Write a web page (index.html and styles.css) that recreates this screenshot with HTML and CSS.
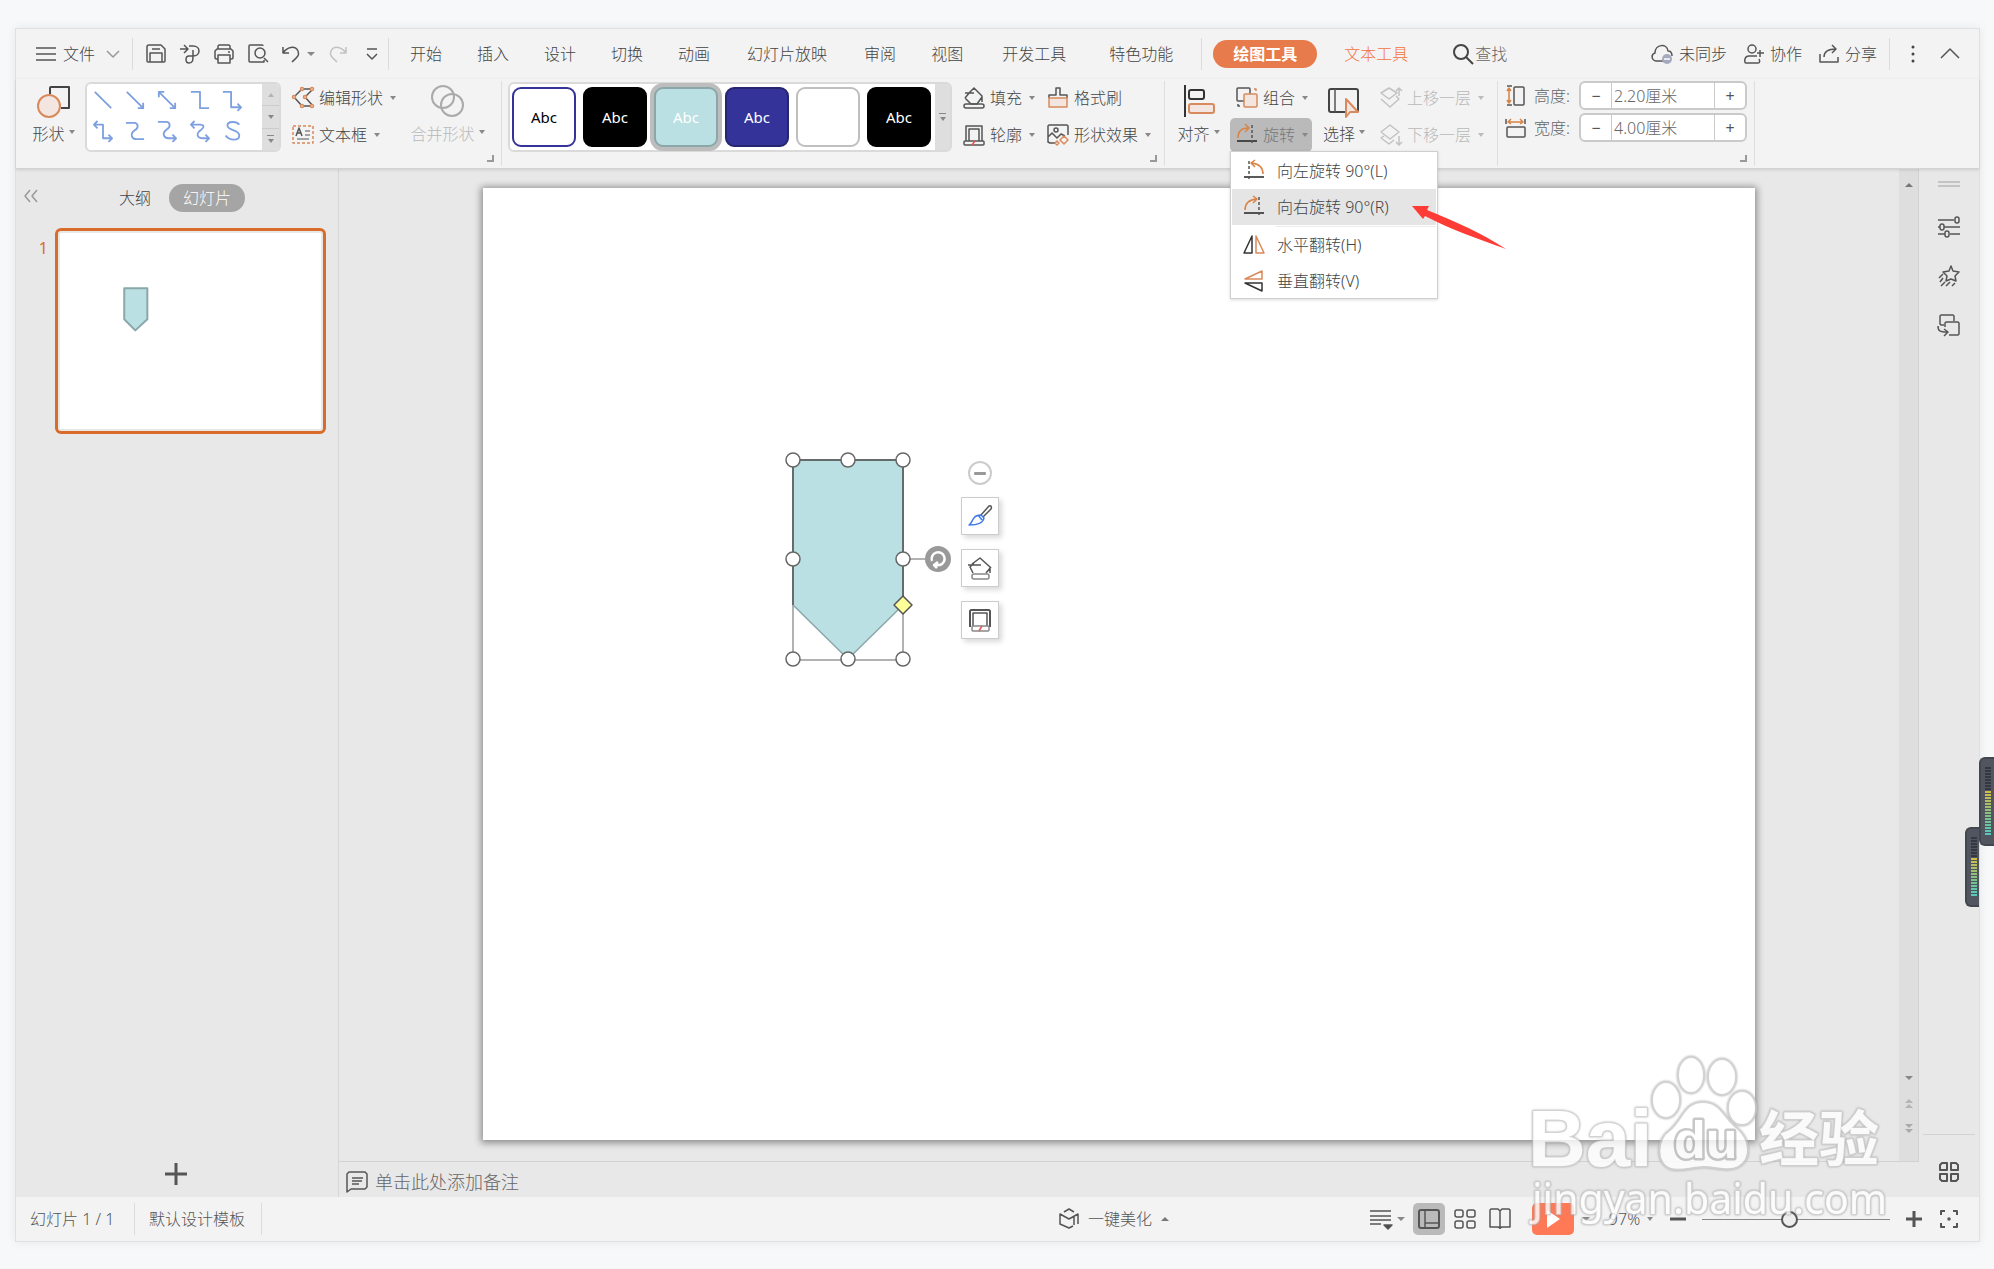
FILE: index.html
```html
<!DOCTYPE html>
<html lang="zh-CN">
<head>
<meta charset="utf-8">
<title>演示文稿</title>
<link rel="stylesheet" href="styles.css">
</head>
<body>
<main class="window">
  <header class="tabs">
    <button class="tab file"><svg class="i20" viewBox="0 0 20 20"><path d="M0 4h20M0 10h20M0 16h20"/></svg>文件<svg class="chev" viewBox="0 0 14 8"><path d="M1 1l6 6 6-6"/></svg></button>
    <span class="vline"></span>
    <div class="quick">
      <button aria-label="保存"><svg class="i20" viewBox="0 0 20 20"><path d="M1 3a2 2 0 0 1 2-2h12l4 4v12a1 1 0 0 1-1 1H2a1 1 0 0 1-1-1zM4 18v-9h12v9M6 5h8"/></svg></button>
      <button aria-label="输出"><svg class="i20" viewBox="0 0 20 20"><path d="M0 5h8M4 1l4 4-4 4M9 2h4c8 0 8 10 0 10H9c-4 0-4 7 0 7s4-3 4-7V6"/></svg></button>
      <button aria-label="打印"><svg class="i20" viewBox="0 0 20 20"><path d="M4 5V2l1-1h10l1 1v3M4 15H2l-1-1V7l2-2h14l2 2v7l-1 1h-2M4 11h12v8H4zM14 8h2"/></svg></button>
      <button aria-label="打印预览"><svg class="i20" viewBox="0 0 20 20"><path d="M8 18H2a1 1 0 0 1-1-1V2a1 1 0 0 1 1-1h12a1 1 0 0 1 1 1M16 14l4 4M16 16v2H8"/><circle cx="12" cy="9" r="5"/></svg></button>
      <button aria-label="撤销"><svg class="i18" viewBox="0 0 18 18"><path d="M1 2v6h6M1 8C5 2 13 0 16 6c2 5-2 7-6 11"/></svg></button><span class="caret first"></span>
      <button aria-label="恢复"><svg class="i18 dim" viewBox="0 0 18 18"><path d="M17 2v6h-6M17 8C13 2 5 0 2 6c-2 5 2 7 6 11"/></svg></button>
      <button aria-label="更多" class="more"><svg class="i12" viewBox="0 0 12 12"><path d="M1 1h10M1 6l5 5 5-5"/></svg></button>
    </div>
    <span class="vline"></span>
    <nav class="menu">
      <a href="#">开始</a><a href="#">插入</a><a href="#">设计</a><a href="#">切换</a><a href="#">动画</a><a href="#" class="long">幻灯片放映</a><a href="#">审阅</a><a href="#">视图</a><a href="#" class="wide">开发工具</a><a href="#" class="wide">特色功能</a>
    </nav>
    <span class="vline after-menu"></span>
    <a href="#" class="pill">绘图工具</a>
    <a href="#" class="texttool">文本工具</a>
    <button class="find"><svg class="i22" viewBox="0 0 22 22"><circle cx="9" cy="9" r="7" stroke-width="2"/><path d="M14 14l7 7" stroke-width="2"/></svg>查找</button>
    <div class="account">
      <button><svg class="i22" viewBox="0 0 22 22"><path d="M12 18H5c-5-1-5-7-1-8 0-9 12-10 13-2 3 0 4 2 4 5"/><circle class="badge" cx="16" cy="16" r="5"/><path d="M13 16h6" stroke="#fff"/></svg>未同步</button>
      <button><svg class="i20" viewBox="0 0 20 20"><circle cx="8" cy="5" r="4"/><path d="M13 12H5c-5 0-5 7-3 7h12c2 0 2-2 1-4M13 9h7M16 6v7"/></svg>协作</button>
      <button><svg class="i20" viewBox="0 0 20 20"><path d="M1 10v8h18v-5M5 13c0-6 5-8 12-8M13 1l4 4-4 4"/></svg>分享</button>
    </div>
    <span class="vline"></span>
    <button class="dots" aria-label="更多选项"><svg class="i20" viewBox="0 0 20 20"><g fill="#444" stroke="none"><circle cx="10" cy="3" r="1.5"/><circle cx="10" cy="10" r="1.5"/><circle cx="10" cy="17" r="1.5"/></g></svg></button>
    <button class="collapse" aria-label="收起功能区"><svg class="i20" viewBox="0 0 20 20"><path d="M1 14l9-9 9 9"/></svg></button>
  </header>

  <section class="ribbon" aria-label="绘图工具">
    <button class="big shape"><svg class="i34" viewBox="0 0 34 34"><path stroke="#444" stroke-width="2" d="M13 9V3a1 1 0 0 1 1-1h18v21h-8"/><circle class="peach" cx="12" cy="21" r="11"/></svg><span>形状<i class="caret"></i></span></button>
    <div class="shapes">
      <div class="shape-cells">
        <button aria-label="直线"><svg viewBox="0 0 22 22"><path d="M2 2l18 18"/></svg></button>
        <button aria-label="箭头"><svg viewBox="0 0 22 22"><path d="M2 2l18 18M20 14v6h-6"/></svg></button>
        <button aria-label="双箭头"><svg viewBox="0 0 22 22"><path d="M2 2l18 18M20 14v6h-6M2 8V2h6"/></svg></button>
        <button aria-label="肘形线"><svg viewBox="0 0 22 22"><path d="M1 2h10v18h10"/></svg></button>
        <button aria-label="肘形箭头"><svg viewBox="0 0 22 22"><path d="M1 2h9v17h11M17 15l4 4-4 4"/></svg></button>
        <button aria-label="肘形双箭头"><svg viewBox="0 0 22 22"><path d="M1 4h10v15h10M17 15l4 4-4 4M5 0L1 4l4 4"/></svg></button>
        <button aria-label="曲线"><svg viewBox="0 0 22 22"><path d="M1 2h9c5 0 5 6 1 8-6 4-4 10 2 10h8"/></svg></button>
        <button aria-label="曲线箭头"><svg viewBox="0 0 22 22"><path d="M1 1h9c5 0 5 6 1 8-6 4-4 10 2 10h8M17 15l4 4-4 4"/></svg></button>
        <button aria-label="曲线双箭头"><svg viewBox="0 0 22 22"><path d="M1 4h10c5 0 5 3 1 6-6 4-4 9 2 9h7M17 15l4 4-4 4M5 0L1 4l4 4"/></svg></button>
        <button aria-label="自由曲线"><svg viewBox="0 0 22 22"><path d="M19 4c-3-4-13-4-13 1 0 6 13 4 13 11 0 6-11 6-15 0"/></svg></button>
      </div>
      <div class="gallery-scroll">
        <button aria-label="上一行"><i class="caret up pale"></i></button><button aria-label="下一行"><i class="caret"></i></button><button aria-label="展开"><i class="bar"></i><i class="caret"></i></button>
      </div>
    </div>
    <div class="col edit">
      <button><svg class="i22" viewBox="0 0 22 22"><path stroke="#555" d="M10 2L2 10l8 9M10 2h11l-8 8 8 9H10"/><g class="peach thin"><circle cx="10" cy="2" r="1.5"/><circle cx="20" cy="2" r="1.5"/><circle cx="2" cy="10" r="1.5"/><circle cx="13" cy="10" r="1.5"/><circle cx="10" cy="19" r="1.5"/><circle cx="20" cy="19" r="1.5"/></g></svg>编辑形状<i class="caret"></i></button>
      <button><svg class="i22" viewBox="0 0 22 22"><path stroke="#d9895a" stroke-dasharray="3 2" d="M1 2h20v17H1z"/><path d="M4 12l3-8 3 8M5 9h4" /><path stroke-width="1" d="M13 7h5M13 11h5M5 15h12"/></svg>文本框<i class="caret"></i></button>
    </div>
    <button class="big merge dim" disabled><svg class="i34" viewBox="0 0 34 34"><g stroke="#aaa" stroke-width="2"><circle cx="12" cy="12" r="11"/><circle cx="21" cy="20" r="11"/></g></svg><span>合并形状<i class="caret"></i></span></button>
    <i class="corner"></i>
    <span class="sep"></span>
    <div class="styles">
      <button class="st outline">Abc</button><button class="st black">Abc</button><button class="st teal">Abc</button><button class="st navy">Abc</button><button class="st plain" aria-label="无填充"></button><button class="st black">Abc</button>
      <button class="styles-more" aria-label="更多样式"><i class="bar"></i><i class="caret"></i></button>
    </div>
    <div class="col fill">
      <button><svg class="i22" viewBox="0 0 22 22"><path d="M2 6h9M5 7l6-6 8 8v6M2 11l6 6h6l5-7M2 11l5-6"/><rect x="1" y="17" width="20" height="4" rx="2"/></svg>填充<i class="caret"></i></button>
      <button><svg class="i22" viewBox="0 0 22 22"><path d="M3 17V2h16v15M6 17V5h10v12"/><rect x="1" y="17" width="20" height="4" rx="1"/><path stroke="#e55" d="M9 21l3-4"/></svg>轮廓<i class="caret"></i></button>
    </div>
    <div class="col effect">
      <button><svg class="i22" viewBox="0 0 22 22"><path d="M2 11V8h7V1h4v7h7v3"/><path class="peach thin" d="M2 11h18v9H2z"/></svg>格式刷</button>
      <button><svg class="i22" viewBox="0 0 22 22"><path d="M8 19H3l-2-1V2l1-1h18l1 1v9M1 13l4-4 5 5 4-4 4 2"/><circle cx="9" cy="6" r="2"/><g stroke="#d9895a"><path d="M17 12l4 4-4 4-4-4zM10 17l2 2-2 2-2-2z"/></g></svg>形状效果<i class="caret"></i></button>
    </div>
    <i class="corner"></i>
    <span class="sep"></span>
    <button class="big align"><svg class="i34" viewBox="0 0 34 34"><path stroke="#333" stroke-width="2" d="M3 0v32"/><rect x="7" y="5" width="15" height="9" rx="2" stroke="#333" stroke-width="2"/><rect class="peach" x="7" y="19" width="25" height="9" rx="2"/></svg><span>对齐<i class="caret"></i></span></button>
    <div class="col arrange">
      <button><svg class="i22" viewBox="0 0 22 22"><rect x="1" y="1" width="13" height="13" rx="1"/><rect class="peach thin" x="8" y="7" width="13" height="13" rx="1"/><path stroke="#d9895a" d="M18 2h2v2"/><path d="M2 17v2h2"/></svg>组合<i class="caret"></i></button>
      <div class="rotate">
        <button class="on" aria-expanded="true"><svg class="i22" viewBox="0 0 22 22"><path stroke="#d98345" d="M2 14C2 8 5 4 12 4M9 0l4 4-4 4"/><path d="M1 17h20" stroke="#222"/><path d="M16 1v20" stroke-dasharray="3 2"/></svg>旋转<i class="caret"></i></button>
        <div class="dropdown" role="menu">
          <button role="menuitem"><svg class="i22" viewBox="0 0 22 22"><path stroke="#d98345" d="M20 14c0-6-3-10-11-11M12 0L8 3l4 4"/><path d="M1 17h20" stroke="#222"/><path d="M6 1v20" stroke-dasharray="3 2"/></svg>向左旋转 90°(L)</button>
          <button role="menuitem" class="hover"><svg class="i22" viewBox="0 0 22 22"><path stroke="#d98345" d="M2 14C2 8 5 4 13 3M10 0l4 3-4 4"/><path d="M1 17h20" stroke="#222"/><path d="M16 1v20" stroke-dasharray="3 2"/></svg>向右旋转 90°(R)</button>
          <hr>
          <button role="menuitem"><svg class="i22" viewBox="0 0 22 22"><path d="M9 2v17H1z" stroke="#333"/><path d="M13 2v17h8z" stroke="#d9895a"/></svg>水平翻转(H)</button>
          <button role="menuitem"><svg class="i22" viewBox="0 0 22 22"><path d="M19 1v8H2z" stroke="#d9895a"/><path d="M19 21v-8H2z" stroke="#333"/></svg>垂直翻转(V)</button>
        </div>
        <svg class="pointer" viewBox="0 0 94 44" aria-hidden="true"><path fill="#ff3b36" stroke="none" d="M0 0l17 0-2 4c30 12 54 23 79 39C66 33 40 24 13 10l-2 3z"/></svg>
      </div>
    </div>
    <button class="big select"><svg class="i34" viewBox="0 0 34 34"><rect x="2" y="4" width="29" height="23" rx="2" stroke="#444" stroke-width="2"/><path d="M8 4v23"/><path class="peach" d="M19 14v18l4-5h8z"/></svg><span>选择<i class="caret"></i></span></button>
    <div class="col layer dim">
      <button disabled><svg class="i22" viewBox="0 0 22 22"><path d="M9 1l8 5-8 6-8-6zM1 12l9 8 9-8-3-3M19 9V1M16 4l3-3 3 3"/></svg>上移一层<i class="caret"></i></button>
      <button disabled><svg class="i22" viewBox="0 0 22 22"><path d="M10 1l9 7-9 7-9-7zM4 12l-3 2 8 6 5-4M19 12v9M16 18l3 3 3-3"/></svg>下移一层<i class="caret"></i></button>
    </div>
    <span class="sep"></span>
    <div class="size">
      <div class="field"><svg class="i20" viewBox="0 0 20 20"><rect x="8" y="1" width="10" height="18" rx="1"/><path d="M1 0h5M1 19h5"/><path stroke="#d98345" d="M3 2v15M1 5l2-3 2 3M1 14l2 3 2-3"/></svg><label for="h">高度:</label><div class="spin"><button aria-label="减小高度">−</button><input id="h" value="2.20厘米"><button aria-label="增大高度">+</button></div></div>
      <div class="field"><svg class="i20" viewBox="0 0 20 20"><rect x="1" y="9" width="18" height="10" rx="1"/><path d="M0 1v5M19 1v5"/><path stroke="#d98345" d="M2 4h15M5 1L2 4l3 2M14 1l3 3-3 2"/></svg><label for="w">宽度:</label><div class="spin"><button aria-label="减小宽度">−</button><input id="w" value="4.00厘米"><button aria-label="增大宽度">+</button></div></div>
      <i class="corner"></i>
    </div>
    <span class="sep"></span>
  </section>

  <div class="body">
    <aside class="outline-panel">
      <div class="panel-head">
        <button aria-label="收起" class="fold"><svg class="i14" viewBox="0 0 14 14"><path d="M6 1L1 7l5 6M13 1L8 7l5 6"/></svg></button>
        <button class="view">大纲</button><button class="view current">幻灯片</button>
      </div>
      <div class="slides"><span class="num">1</span><button class="thumb" aria-label="幻灯片 1"><svg viewBox="0 0 262 197"><path fill="#bbe0e3" stroke="#8ba7a9" stroke-width="2" d="M65 56h23v31l-12 11-11-11z"/></svg></button></div>
      <button class="add" aria-label="新建幻灯片"><svg class="i22" viewBox="0 0 22 22"><path stroke-width="3" d="M11 0v22M0 11h22"/></svg></button>
    </aside>
    <section class="center">
      <div class="stage-row">
        <div class="stage">
          <div class="slide">
            <svg class="drawing" viewBox="0 0 240 230">
              <path fill="none" stroke="#999" d="M20 20h110v200H20zM130 119h22"/>
              <path fill="#bbe0e3" stroke="#8ba7a9" d="M20 20h110v145l-55 54-55-54z"/>
              <path fill="none" stroke="#555" d="M20 165V20h110v145"/>
              <g fill="#fff" stroke="#666"><circle cx="20" cy="20" r="7"/><circle cx="75" cy="20" r="7"/><circle cx="130" cy="20" r="7"/><circle cx="20" cy="119" r="7"/><circle cx="130" cy="119" r="7"/><circle cx="20" cy="219" r="7"/><circle cx="75" cy="219" r="7"/><circle cx="130" cy="219" r="7"/></g>
              <path fill="#ffff99" stroke="#555" d="M130 156l9 9-9 9-9-9z"/>
              <circle cx="165" cy="119" r="13" fill="#999" stroke="none"/><path d="M159 121A6.500 6.500 0 1 1 167 125h-4M165 122l-4 3 3 3" stroke="#fff" stroke-width="2.500"/>
            </svg>
            <div class="float-tools">
              <button class="minus" aria-label="收起"></button>
              <button class="ft" aria-label="样式"><svg class="i26" viewBox="0 0 26 26"><path d="M14 12l8-9c2-1 3 1 2 3l-8 8"/><path stroke="#3f7be8" d="M14 12l3 3c-1 6-8 7-15 7 3-2 3-5 5-7 2-3 4-3 7-3zM11 12l4 5"/></svg></button>
              <button class="ft" aria-label="填充"><svg class="i26" viewBox="0 0 26 26"><path d="M1 10h13M5 9l8-6 10 9v6M6 18l-3-6 4-4M19 18l5-6"/><rect x="5" y="19" width="17" height="5" rx="2" stroke="#888"/></svg></button>
              <button class="ft" aria-label="轮廓"><svg class="i26" viewBox="0 0 26 26"><path d="M3 20V4l1-1h18l1 1v16" stroke-width="2"/><path d="M6 19V6h14v13"/><rect x="5" y="19" width="17" height="5" rx="1" stroke="#888"/><path stroke="#e55" d="M12 24l3-5"/></svg></button>
            </div>
          </div>
        </div>
        <div class="scrollbar"><button aria-label="向上滚动"><i class="caret up"></i></button><span class="track"></span><button aria-label="向下滚动"><i class="caret"></i></button><button aria-label="上一张"><i class="caret up pale"></i><i class="caret up pale"></i></button><button aria-label="下一张"><i class="caret pale"></i><i class="caret pale"></i></button></div>
      </div>
      <div class="notes"><svg class="i22" viewBox="0 0 22 22"><path d="M1 21V3l2-2h16l2 2v13l-2 2H5zM6 7h11M6 10h10M6 13h7"/></svg>单击此处添加备注</div>
    </section>
    <aside class="side">
      <span class="grip"></span>
      <button aria-label="属性"><svg class="i22" viewBox="0 0 22 22"><path d="M0 4h16M0 11h2M6 11h16M0 18h7M12 18h10"/><rect x="17" y="1" width="4" height="6" rx="2"/><rect x="2" y="8" width="4" height="6" rx="2"/><rect x="7" y="15" width="4" height="6" rx="2"/></svg></button>
      <button aria-label="动画"><svg class="i22" viewBox="0 0 22 22"><path d="M13 1l2 5 6 1-4 4 1 5-5-2-5 2 1-5-4-4 6-1zM5 9l-4 4M5 13l-3 4M7 17l-4 4M12 17l-4 4M17 18l-3 3"/></svg></button>
      <button aria-label="切换"><svg class="i22" viewBox="0 0 22 22"><path d="M6 11H3l-1-1V2l1-1h12l1 1v5M11 8h9l1 1v11l-1 1h-9M7 13V9l1-1h3M0 12c0 5 2 6 9 6M6 15l4 3-4 4"/></svg></button>
      <button class="apps" aria-label="工具"><svg class="i22" viewBox="0 0 22 22"><g stroke-width="2"><path d="M4 2h5v7H2V4zM13 2h5l2 2v5h-7zM2 13h7v7H4l-2-2zM13 13h7v5l-2 2h-5z"/></g></svg></button>
    </aside>
  </div>

  <footer class="status">
    <span class="count">幻灯片 1 / 1</span><span class="vline"></span><span class="tpl">默认设计模板</span><span class="vline"></span>
    <button class="beautify"><svg class="i20" viewBox="0 0 20 20"><path d="M5 3l5-3 5 3M14 17l-4 2-9-4V5l9 5 9-5v10M15 8v8"/></svg>一键美化<i class="caret up"></i></button>
    <div class="views">
      <button aria-label="备注"><svg class="i22" viewBox="0 0 22 22"><path d="M0 3h21M0 8h21M0 12h21M0 16h11"/><path fill="#444" d="M14 17h8l-4 4z"/></svg></button><i class="caret"></i>
      <button class="on" aria-label="普通视图"><svg class="i22" viewBox="0 0 22 22"><rect x="1" y="2" width="20" height="18" rx="2" stroke-width="2"/><path d="M7 2v18M7 15h14"/></svg></button>
      <button aria-label="幻灯片浏览"><svg class="i22" viewBox="0 0 22 22"><rect x="1" y="2" width="8" height="7" rx="2"/><rect x="13" y="2" width="8" height="7" rx="2"/><rect x="1" y="13" width="8" height="7" rx="2"/><rect x="13" y="13" width="8" height="7" rx="2"/></svg></button>
      <button class="read" aria-label="阅读视图"><svg class="i22" viewBox="0 0 22 22"><path d="M11 3v18M11 3L9 1H2L1 2v17h8l2 1 2-1h8V2l-1-1h-7z"/></svg></button>
      <button class="play" aria-label="放映"><svg class="i22" viewBox="0 0 22 22"><path fill="#fff" stroke="none" d="M5 2l13 9-13 9z"/></svg></button><i class="caret"></i>
    </div>
    <div class="zoom">
      <button class="pct">97%<i class="caret"></i></button>
      <button aria-label="缩小"><svg class="i18" viewBox="0 0 18 18"><path stroke-width="3" d="M1 9h16"/></svg></button>
      <input type="range" min="0" max="100" value="46" aria-label="缩放">
      <button aria-label="放大"><svg class="i18" viewBox="0 0 18 18"><path stroke-width="3" d="M1 9h16M9 1v16"/></svg></button>
      <button class="fit" aria-label="适应窗口"><svg class="i18" viewBox="0 0 18 18"><path stroke-width="2" d="M1 5V1h4M13 1h4v4M17 13v4h-4M5 17H1v-4"/><circle cx="9" cy="9" r="1"/></svg></button>
    </div>
  </footer>
</main>

<div class="meter lower" aria-hidden="true"><span></span></div>
<div class="meter upper" aria-hidden="true"><span></span></div>
<svg class="watermark" viewBox="0 0 370 186">
  <g class="wm">
    <ellipse cx="142" cy="55" rx="14" ry="18"/><ellipse cx="167" cy="30" rx="13" ry="18"/><ellipse cx="198" cy="32" rx="14" ry="18"/><ellipse cx="218" cy="63" rx="14" ry="17"/>
    <path d="M179 57c-19 0-20 17-33 28-14 9-15 34 1 39 10 3 22-2 33-2 12 0 25 5 34 0 15-8 12-28-1-39-13-10-16-26-34-26z"/>
    <text class="brand" x="4" y="121">Bai</text><text class="du" x="150" y="113">du</text><text class="cn" x="235" y="116">经验</text>
    <text class="url" x="8" y="169">jingyan.baidu.com</text>
  </g>
</svg>
</body>
</html>
```
FILE: styles.css
```css
* { box-sizing: border-box; }
body { margin: 0; min-height: 100vh; display: flex; position: relative; padding: 28px 14px 27px 15px; background: #f7f8fa; color: #444; overflow-x: hidden;
  font: 300 16px/24px "Noto Sans", "Noto Sans CJK SC", sans-serif; }
button { font: inherit; color: inherit; background: none; border: 0; padding: 0; display: flex; align-items: center; justify-content: center; white-space: nowrap; }
a { color: inherit; text-decoration: none; white-space: nowrap; }
svg { display: block; flex: none; fill: none; stroke: #555; stroke-width: 1.5; stroke-linejoin: round; }
.i12 { width: 12px; height: 12px; }
.i14 { width: 14px; height: 14px; }
.i18 { width: 18px; height: 18px; }
.i20 { width: 20px; height: 20px; }
.i22 { width: 22px; height: 22px; }
.i26 { width: 26px; height: 26px; }
.i34 { width: 34px; height: 34px; }
.i22, .i20, .i34 { overflow: visible; }
.peach { fill: #f3e5df; stroke: #d98a5c; stroke-width: 2; }
.thin { stroke-width: 1.5; }
.caret { display: inline-block; flex: none; width: 0; height: 0; border: 3px solid transparent; border-top: 4px solid #888; border-bottom: 0; }
.caret.up { border-top: 0; border-bottom: 4px solid #777; }
.caret.pale { border-top-color: #aaa; border-bottom-color: #b4b4b4; }
.caret.up.pale { border-top: 0; }
.bar { display: block; width: 7px; height: 1px; background: #888; }
.vline { width: 1px; height: 32px; background: #dcdcdc; flex: none; }

.window { flex: 1; min-width: 0; min-height: 1213px; display: flex; flex-direction: column; border: 1px solid #e0e0e0; background: #e8e8e8; box-shadow: 0 0 10px rgba(0,0,0,.07); }

.tabs { height: 50px; display: flex; align-items: center; background: #f3f3f3; padding-left: 20px; }
.file { gap: 7px; margin-right: 12px; }
.chev { width: 14px; height: 8px; stroke: #999; margin-left: 4px; }
.quick { display: flex; align-items: center; gap: 14px; padding-left: 13px; width: 255px; }
.quick .first { margin: 0 0 0 -7px; }
.quick .more { margin-left: 5px; }
.dim, .dim svg, svg.dim { color: #b8b8b8; stroke: #c2c2c2; }
.menu { display: flex; gap: 35px; margin-left: 21px; }
.menu .long { padding: 0 2px; }
.menu .wide { padding: 0 4px; }
.after-menu { margin-left: 24px; }
.pill { background: #e77b4b; color: #fff; font-weight: bold; padding: 2px 20px; border-radius: 14px; margin-left: 11px; }
.texttool { color: #f4743f; margin-left: 27px; }
.find { margin-left: 44px; gap: 1px; color: #666; }
.find svg { stroke: #444; }
.account { display: flex; gap: 17px; margin: 0 12px 0 auto; }
.account button { gap: 6px; }
.badge { fill: #a4a9bd; stroke: none; }
.dots { margin-left: 13px; }
.collapse { margin: 0 19px 0 17px; }

.ribbon { height: 90px; display: flex; align-items: flex-start; background: #f3f3f3; border-bottom: 1px solid #d2d2d2; box-shadow: 0 1px 3px rgba(0,0,0,.12); position: relative; z-index: 2; padding-top: 2px; }
.ribbon > * { flex: none; }
.big { flex-direction: column; gap: 3px; height: 71px; padding-top: 4px; align-items: center; justify-content: flex-start; }
.big span { display: flex; align-items: center; gap: 4px; height: 24px; }
.big .caret { margin-bottom: 5px; }
.shape { margin-left: 16px; width: 43px; }
.merge { width: 75px; }
.align { margin-left: 12px; width: 43px; }
.select { margin-left: 10px; width: 44px; }
.corner { display: block; width: 7px; height: 7px; border: solid #999; border-width: 0 2px 2px 0; margin: 74px 0 0 2px; }
.sep { width: 1px; height: 85px; background: #dedede; margin-left: 7px; }
.shapes { display: flex; margin: 1px 0 0 10px; width: 196px; height: 70px; border: 2px solid #dadada; border-radius: 6px; background: #fff; overflow: hidden; }
.shape-cells { flex: 1; display: grid; grid-template-columns: repeat(5, 1fr); padding: 0 14px 4px 0; }
.shape-cells svg { width: 20px; height: 20px; stroke: #7da0e0; overflow: visible; stroke-width: 2; }
.gallery-scroll { width: 17px; background: #dedede; display: flex; flex-direction: column; }
.gallery-scroll button { flex: 1; flex-direction: column; gap: 3px; border-bottom: 1px solid #ccc; }
.gallery-scroll button:last-child { border: 0; }
.col { display: flex; flex-direction: column; gap: 3px; }
.col > button, .rotate > button { height: 34px; gap: 5px; justify-content: flex-start; }
.col .caret { margin-left: 2px; }
.edit { margin-left: 11px; width: 118px; }
.styles { display: flex; align-items: center; gap: 7px; margin: 1px 0 0 6px; width: 444px; height: 70px; border: 2px solid #dadada; border-radius: 6px; background: #fff; padding-left: 2px; }
.st { width: 64px; height: 60px; border-radius: 9px; border: 2px solid #000; font-size: 15px; font-weight: 400; }
.outline { border-color: #333399; color: #000; }
.black { background: #000; color: #fff; }
.teal { background: #bbe0e3; border-color: #8ba7a9; color: #fff; box-shadow: 0 0 0 4px #bdbdbd; }
.navy { background: #333399; border-color: #26266f; color: #fff; }
.plain { border-color: #bfbfbf; background: #fff; }
.styles-more { flex: 1; align-self: stretch; margin-left: -3px; background: #dedede; flex-direction: column; gap: 3px; }
.fill { margin-left: 11px; width: 84px; }
.effect { width: 101px; }
.arrange { margin-left: 10px; width: 82px; }
.arrange > button, .rotate > button { padding-left: 6px; width: 82px; }
.on { background: #bababa; border-radius: 5px; }
.rotate { position: relative; }
.rotate .on { color: #777; }
.dropdown { position: absolute; left: 0; top: 33px; width: 208px; height: 148px; padding: 1px; background: #fff; border: 1px solid #cfcfcf; box-shadow: 0 1px 3px rgba(0,0,0,.15); }
.dropdown button { width: 100%; height: 36px; justify-content: flex-start; gap: 12px; padding-left: 11px; }
.dropdown .hover { background: #e5e5e5; }
.dropdown hr { margin: 1px 0 0 44px; border: 0; height: 1px; background: #ececec; }
.pointer { position: absolute; left: 182px; top: 88px; width: 94px; height: 44px; }
.layer { margin-left: 14px; width: 110px; }
.layer .caret { border-top-color: #bbb; }
.size { margin-left: 8px; display: flex; flex-direction: column; gap: 3px; }
.size .corner { margin: 10px 0 0; align-self: flex-end; }
.field { display: flex; align-items: center; color: #666; }
.field label { width: 45px; margin-left: 8px; }
.spin { width: 168px; height: 29px; display: flex; border: 2px solid #cacaca; border-radius: 6px; background: #fff; }
.spin button { width: 30px; color: #555; font-weight: 400; }
.spin input { flex: 1; min-width: 0; border: solid #cacaca; border-width: 0 1px; padding: 0 2px; font: inherit; color: #666; background: none; }

.body { flex: 1; display: flex; min-height: 0; }
.outline-panel { width: 323px; border-right: 1px solid #d6d6d6; display: flex; flex-direction: column; }
.panel-head { display: flex; align-items: center; padding: 14px 0 0 8px; height: 44px; }
.fold svg { stroke: #999; }
.view { height: 28px; margin-left: 81px; }
.view.current { background: #a5a5a5; color: #fff; border-radius: 14px; padding: 0 14px; margin-left: 18px; }
.fold { margin-bottom: 4px; }
.slides { display: flex; margin-top: 15px; }
.num { width: 31px; margin-left: 8px; text-align: right; padding: 8px 7px 0 0; color: #d96b2b; font-weight: 400; }
.thumb { flex: 1; margin-right: 12px; border: 3px solid #d96b2b; border-radius: 6px; background: #fff; box-shadow: inset 0 0 0 2px #e8e8e8; padding: 1px; }
.thumb svg { width: 100%; }
.add { margin: auto 0 12px; padding-right: 3px; }
.center { flex: 1; min-width: 0; display: flex; flex-direction: column; }
.stage-row { flex: 1; display: flex; }
.stage { flex: 1; padding: 19px 144px 21px; display: flex; }
.slide { flex: 1; position: relative; background: #fff; box-shadow: 0 1px 7px 2px rgba(0,0,0,.4); }
.drawing { position: absolute; left: 290px; top: 252px; width: 240px; height: 230px; }
.float-tools { position: absolute; left: 478px; top: 273px; width: 38px; display: flex; flex-direction: column; align-items: center; gap: 14px; }
.minus { width: 24px; height: 24px; border: 2px solid #ccc; border-radius: 12px; margin-bottom: -2px; }
.minus::before { content: ""; width: 12px; height: 3px; background: #999; border-radius: 1px; }
.ft { width: 38px; height: 38px; border: 1px solid #ccc; background: #fff; box-shadow: 3px 3px 5px rgba(0,0,0,.15); }
.scrollbar { width: 20px; background: #dedede; border-right: 1px solid #d2d2d2; display: flex; flex-direction: column; padding: 8px 0 16px; }
.scrollbar button { height: 16px; flex-direction: column; gap: 1px; margin-bottom: 9px; }
.scrollbar .caret { border-left-width: 4px; border-right-width: 4px; }
.track { flex: 1; }
.notes { height: 36px; border-top: 1px solid #d2d2d2; display: flex; align-items: center; gap: 7px; padding: 4px 0 0 7px; font-size: 18px; color: #666; }
.side { width: 60px; display: flex; flex-direction: column; align-items: center; gap: 27px; }
.grip { width: 22px; height: 6px; border: solid #c4c4c4; border-width: 2px 0; margin: 12px 0 2px; }
.apps { margin-top: auto; width: 52px; border-top: 1px solid #d2d2d2; padding: 26px 0 14px; }

.status { height: 44px; display: flex; align-items: center; background: #f3f3f3; color: #555; }
.count { width: 118px; padding-left: 14px; white-space: nowrap; }
.tpl { padding: 0 16px 0 14px; white-space: nowrap; }
.beautify { gap: 9px; margin: 0 196px 0 auto; }
.beautify .caret, .views .caret, .quick .caret { border-left-width: 4px; border-right-width: 4px; }
.views { display: flex; align-items: center; }
.views button { width: 32px; height: 32px; }
.views > button + button { margin-left: 9px; }
.views > .on { margin: 0 0 0 8px; }
.views > .on + button { margin-left: 4px; }
.views > .read { margin-left: 3px; }
.views > .play { width: 42px; margin: 0 8px 0 16px; background: #ff7957; border-radius: 5px; }
.zoom { display: flex; align-items: center; margin: 0 21px 0 17px; }
.pct { gap: 7px; width: 48px; margin-right: 14px; }
.zoom input { width: 188px; height: 18px; margin: 0 15px; appearance: none; background: none; }
.zoom input::-webkit-slider-runnable-track { height: 1px; background: #888; }
.zoom input::-webkit-slider-thumb { appearance: none; width: 17px; height: 17px; margin-top: -8px; border: 2px solid #555; border-radius: 50%; background: #eee; }
.fit { margin-left: 17px; }

.meter { position: absolute; background: #50555f; border: 2px solid #42464f; border-right: 0; border-radius: 6px 0 0 6px; padding: 8px 0 8px 4px; }
.meter span { display: block; width: 6px; height: 100%; background: repeating-linear-gradient(transparent 0 2px, #50555f 2px 3px), linear-gradient(#343840 0 35%, #d5bd45 35%, #7cc08a 72%, #4fcac0); }
.upper { right: 0; top: 757px; width: 15px; height: 89px; }
.lower { right: 15px; top: 827px; width: 14px; height: 80px; }
.watermark { position: absolute; right: 100px; top: 1045px; width: 370px; height: 186px; overflow: visible; opacity: .8; pointer-events: none; z-index: 3; filter: drop-shadow(0 0 1px #999); }
.wm { fill: #fff; stroke: #c9c9c9; stroke-width: 2; }
.wm text { paint-order: stroke; font-weight: bold; }
.brand { font: 80px "Liberation Sans", sans-serif; }
.du { font: 52px "Liberation Sans", sans-serif; stroke: #bbb; stroke-width: 5; }
.cn { font: 60px "Noto Sans CJK SC", sans-serif; }
.wm .url { font: 41px "Noto Sans", sans-serif; }
```
